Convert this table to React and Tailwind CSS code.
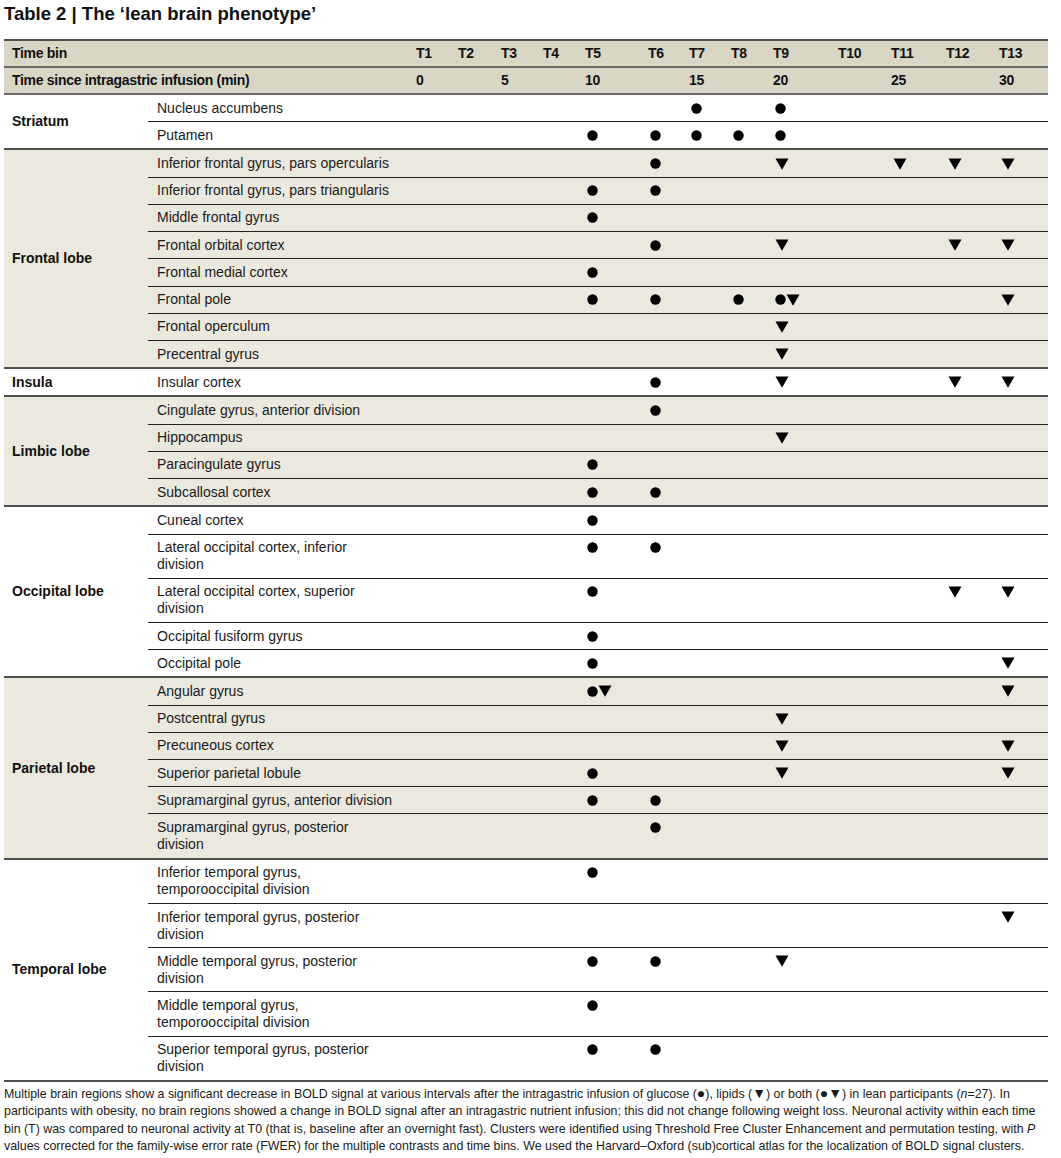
const COLS = [42, 43, 42, 42, 63, 41, 42, 42, 65, 53, 55, 53, 55];
const BINS = ["T1", "T2", "T3", "T4", "T5", "T6", "T7", "T8", "T9", "T10", "T11", "T12", "T13"];
const MINS = { 1: "0", 3: "5", 5: "10", 7: "15", 9: "20", 11: "25", 13: "30" };

const groups = [
  {
    name: "Striatum",
    bg: "bg-white",
    rows: [
      ["Nucleus accumbens", { 7: "c", 9: "c" }],
      ["Putamen", { 5: "c", 6: "c", 7: "c", 8: "c", 9: "c" }],
    ],
  },
  {
    name: "Frontal lobe",
    bg: "bg-[#ebe8de]",
    rows: [
      ["Inferior frontal gyrus, pars opercularis", { 6: "c", 9: "t", 11: "t", 12: "t", 13: "t" }],
      ["Inferior frontal gyrus, pars triangularis", { 5: "c", 6: "c" }],
      ["Middle frontal gyrus", { 5: "c" }],
      ["Frontal orbital cortex", { 6: "c", 9: "t", 12: "t", 13: "t" }],
      ["Frontal medial cortex", { 5: "c" }],
      ["Frontal pole", { 5: "c", 6: "c", 8: "c", 9: "ct", 13: "t" }],
      ["Frontal operculum", { 9: "t" }],
      ["Precentral gyrus", { 9: "t" }],
    ],
  },
  {
    name: "Insula",
    bg: "bg-white",
    rows: [["Insular cortex", { 6: "c", 9: "t", 12: "t", 13: "t" }]],
  },
  {
    name: "Limbic lobe",
    bg: "bg-[#ebe8de]",
    rows: [
      ["Cingulate gyrus, anterior division", { 6: "c" }],
      ["Hippocampus", { 9: "t" }],
      ["Paracingulate gyrus", { 5: "c" }],
      ["Subcallosal cortex", { 5: "c", 6: "c" }],
    ],
  },
  {
    name: "Occipital lobe",
    bg: "bg-white",
    rows: [
      ["Cuneal cortex", { 5: "c" }],
      ["Lateral occipital cortex, inferior\ndivision", { 5: "c", 6: "c" }],
      ["Lateral occipital cortex, superior\ndivision", { 5: "c", 12: "t", 13: "t" }],
      ["Occipital fusiform gyrus", { 5: "c" }],
      ["Occipital pole", { 5: "c", 13: "t" }],
    ],
  },
  {
    name: "Parietal lobe",
    bg: "bg-[#ebe8de]",
    rows: [
      ["Angular gyrus", { 5: "ct", 13: "t" }],
      ["Postcentral gyrus", { 9: "t" }],
      ["Precuneous cortex", { 9: "t", 13: "t" }],
      ["Superior parietal lobule", { 5: "c", 9: "t", 13: "t" }],
      ["Supramarginal gyrus, anterior division", { 5: "c", 6: "c" }],
      ["Supramarginal gyrus, posterior\ndivision", { 6: "c" }],
    ],
  },
  {
    name: "Temporal lobe",
    bg: "bg-white",
    rows: [
      ["Inferior temporal gyrus,\ntemporooccipital division", { 5: "c" }],
      ["Inferior temporal gyrus, posterior\ndivision", { 13: "t" }],
      ["Middle temporal gyrus, posterior\ndivision", { 5: "c", 6: "c", 9: "t" }],
      ["Middle temporal gyrus,\ntemporooccipital division", { 5: "c" }],
      ["Superior temporal gyrus, posterior\ndivision", { 5: "c", 6: "c" }],
    ],
  },
];

const Dot = () => (
  <svg width="11" height="11" viewBox="0 0 11 11" className="shrink-0">
    <circle cx="5.5" cy="5.5" r="5.2" fill="#000" />
  </svg>
);

const Tri = () => (
  <svg width="14" height="12" viewBox="0 0 14 12" className="shrink-0">
    <path d="M0.5 0.5 H13.5 L7 11.8 Z" fill="#000" />
  </svg>
);

const Mark = ({ kind }) => {
  if (!kind) return null;
  return (
    <div className="flex h-[17px] items-center">
      {kind.includes("c") && <Dot />}
      {kind.includes("t") && <Tri />}
    </div>
  );
};

export default function App() {
  return (
    <div className="bg-white px-[4px] pt-[2px] pb-4 text-[#111]" style={{ fontFamily: '"Liberation Sans", Arial, sans-serif' }}>
      <h1 className="text-[18.5px] font-bold leading-[24px]">
        Table 2 | The ‘lean brain phenotype’
      </h1>

      <table className="mt-[13px] w-[1044px] table-fixed border-collapse text-[14px] leading-[17px]">
        <colgroup>
          <col style={{ width: 144 }} />
          <col style={{ width: 262 }} />
          {COLS.map((w, i) => (
            <col key={i} style={{ width: w }} />
          ))}
        </colgroup>
        <thead className="bg-[#d9d6c5] font-bold tracking-[-0.3px]">
          <tr>
            <td colSpan={2} className="border-t-2 border-[#4f4f4f] py-[4px] pl-[8px]">
              Time bin
            </td>
            {BINS.map((b) => (
              <td key={b} className="border-t-2 border-[#4f4f4f] py-[4px] pl-[6px]">
                {b}
              </td>
            ))}
          </tr>
          <tr>
            <td colSpan={2} className="border-t-2 border-b-2 border-[#6a6a6a] py-[4px] pl-[8px]">
              Time since intragastric infusion (min)
            </td>
            {BINS.map((b, i) => (
              <td key={b} className="border-t-2 border-b-2 border-[#6a6a6a] py-[4px] pl-[6px]">
                {MINS[i + 1] || ""}
              </td>
            ))}
          </tr>
        </thead>
        {groups.map((g, gi) => (
          <tbody key={g.name} className={g.bg}>
            {g.rows.map(([label, marks], ri) => {
              const first = ri === 0;
              const last = gi === groups.length - 1 && ri === g.rows.length - 1;
              const line = first
                ? "border-t-2 border-[#505050]"
                : "border-t border-[#222]";
              const bottom = last ? " border-b-2 border-b-[#505050]" : "";
              return (
                <tr key={label}>
                  {first && (
                    <td
                      rowSpan={g.rows.length}
                      className={"border-t-2 border-[#505050] pl-[8px] align-middle font-bold" + (gi === groups.length - 1 ? " border-b-2 border-b-[#505050]" : "")}
                    >
                      {g.name}
                    </td>
                  )}
                  <td className={line + bottom + " whitespace-pre-line py-[4.62px] pl-[9px] align-top text-[#1a1a1a]"}>
                    {label}
                  </td>
                  {BINS.map((b, i) => (
                    <td key={b} className={line + bottom + " py-[4.62px] pl-[8px] align-top"}>
                      <Mark kind={marks[i + 1]} />
                    </td>
                  ))}
                </tr>
              );
            })}
          </tbody>
        ))}
      </table>

      <div className="mt-[4px] text-[12.4px] leading-[17.5px] text-[#1a1a1a]">
        <p className="whitespace-nowrap">
          Multiple brain regions show a significant decrease in BOLD signal at various intervals after the intragastric infusion of glucose (<span className="text-[14px] leading-none">●</span>), lipids (<span className="text-[14px] leading-none">▼</span>) or both (<span className="text-[14px] leading-none">●▼</span>) in lean participants (<i>n</i>=27). In
        </p>
        <p className="whitespace-nowrap">
          participants with obesity, no brain regions showed a change in BOLD signal after an intragastric nutrient infusion; this did not change following weight loss. Neuronal activity within each time
        </p>
        <p className="whitespace-nowrap">
          bin (T) was compared to neuronal activity at T0 (that is, baseline after an overnight fast). Clusters were identified using Threshold Free Cluster Enhancement and permutation testing, with <i>P</i>
        </p>
        <p className="whitespace-nowrap">
          values corrected for the family-wise error rate (FWER) for the multiple contrasts and time bins. We used the Harvard–Oxford (sub)cortical atlas for the localization of BOLD signal clusters.
        </p>
      </div>
    </div>
  );
}
